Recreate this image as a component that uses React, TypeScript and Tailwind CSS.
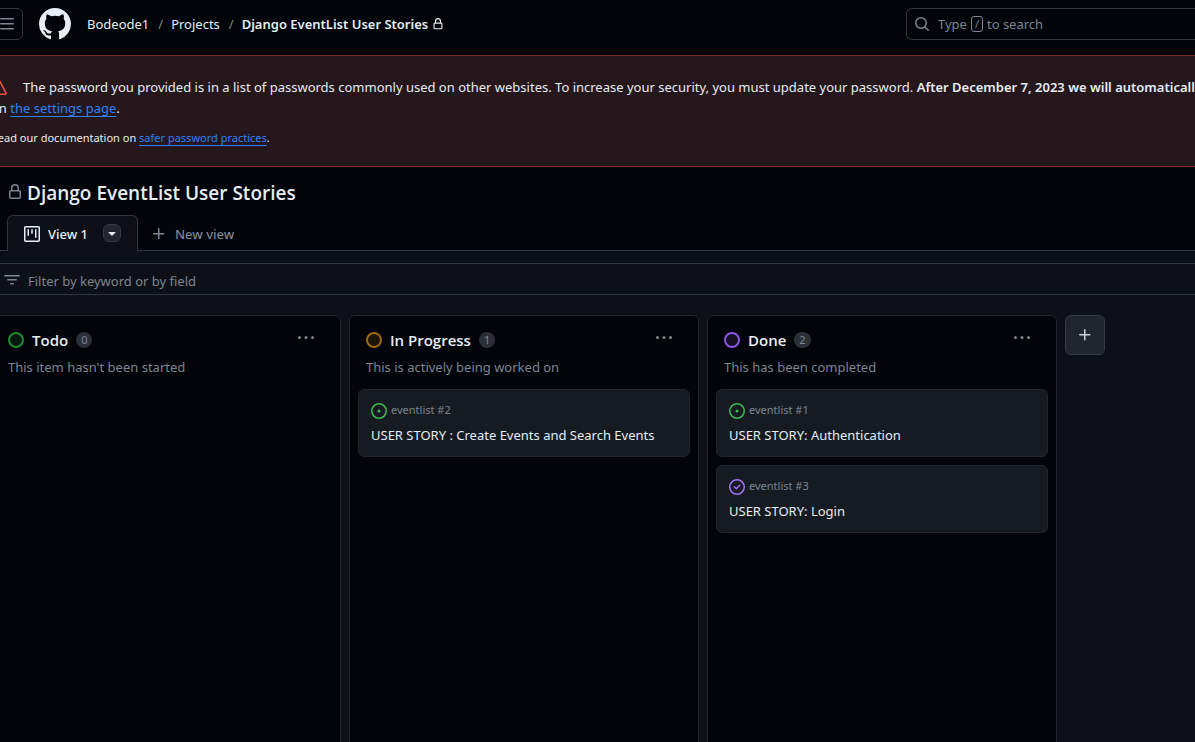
import type { ReactNode } from "react";

type IconProps = { className?: string; size?: number; children?: ReactNode };

function Octicon({ className = "", size = 16, children }: IconProps) {
  return (
    <svg
      aria-hidden="true"
      viewBox="0 0 16 16"
      width={size}
      height={size}
      fill="currentColor"
      className={`shrink-0 ${className}`}
    >
      {children}
    </svg>
  );
}

const paths = {
  bars: "M1 2.75A.75.75 0 0 1 1.75 2h12.5a.75.75 0 0 1 0 1.5H1.75A.75.75 0 0 1 1 2.75Zm0 5A.75.75 0 0 1 1.75 7h12.5a.75.75 0 0 1 0 1.5H1.75A.75.75 0 0 1 1 7.75ZM1.75 12h12.5a.75.75 0 0 1 0 1.5H1.75a.75.75 0 0 1 0-1.5Z",
  github:
    "M8 0c4.42 0 8 3.58 8 8a8.013 8.013 0 0 1-5.45 7.59c-.4.08-.55-.17-.55-.38 0-.27.01-1.13.01-2.2 0-.75-.25-1.23-.54-1.48 1.78-.2 3.65-.88 3.65-3.95 0-.88-.31-1.59-.82-2.15.08-.2.36-1.02-.08-2.12 0 0-.67-.22-2.2.82-.64-.18-1.32-.27-2-.27-.68 0-1.36.09-2 .27-1.53-1.03-2.2-.82-2.2-.82-.44 1.1-.16 1.92-.08 2.12-.51.56-.82 1.28-.82 2.15 0 3.06 1.86 3.75 3.64 3.95-.23.2-.44.55-.51 1.07-.46.21-1.61.55-2.33-.66-.15-.24-.6-.83-1.23-.82-.67.01-.27.38.01.53.34.19.73.9.82 1.13.16.45.68 1.31 2.69.94 0 .67.01 1.3.01 1.49 0 .21-.15.45-.55.38A7.995 7.995 0 0 1 0 8c0-4.42 3.58-8 8-8Z",
  lock: "M4 4a4 4 0 0 1 8 0v2h.25c.966 0 1.75.784 1.75 1.75v5.5A1.75 1.75 0 0 1 12.25 15h-8.5A1.75 1.75 0 0 1 2 13.25v-5.5C2 6.784 2.784 6 3.75 6H4Zm8.25 3.5h-8.5a.25.25 0 0 0-.25.25v5.5c0 .138.112.25.25.25h8.5a.25.25 0 0 0 .25-.25v-5.5a.25.25 0 0 0-.25-.25ZM10.5 6V4a2.5 2.5 0 1 0-5 0v2Z",
  search:
    "M10.68 11.74a6 6 0 0 1-7.922-8.982 6 6 0 0 1 8.982 7.922l3.04 3.04a.749.749 0 0 1-.326 1.275.749.749 0 0 1-.734-.215ZM11.5 7a4.499 4.499 0 1 0-8.997 0A4.499 4.499 0 0 0 11.5 7Z",
  alert:
    "M6.457 1.047c.659-1.234 2.427-1.234 3.086 0l6.082 11.378A1.75 1.75 0 0 1 14.082 15H1.918a1.75 1.75 0 0 1-1.543-2.575Zm1.763.707a.25.25 0 0 0-.44 0L1.698 13.132a.25.25 0 0 0 .22.368h12.164a.25.25 0 0 0 .22-.368Zm.53 3.996v2.5a.75.75 0 0 1-1.5 0v-2.5a.75.75 0 0 1 1.5 0ZM9 11a1 1 0 1 1-2 0 1 1 0 0 1 2 0Z",
  project:
    "M1.75 0h12.5C15.216 0 16 .784 16 1.75v12.5A1.75 1.75 0 0 1 14.25 16H1.75A1.75 1.75 0 0 1 0 14.25V1.75C0 .784.784 0 1.75 0ZM1.5 1.75v12.5c0 .138.112.25.25.25h12.5a.25.25 0 0 0 .25-.25V1.75a.25.25 0 0 0-.25-.25H1.75a.25.25 0 0 0-.25.25ZM11.75 3a.75.75 0 0 1 .75.75v7.5a.75.75 0 0 1-1.5 0v-7.5a.75.75 0 0 1 .75-.75Zm-8.25.75a.75.75 0 0 1 1.5 0v5.5a.75.75 0 0 1-1.5 0ZM8 3a.75.75 0 0 1 .75.75v3.5a.75.75 0 0 1-1.5 0v-3.5A.75.75 0 0 1 8 3Z",
  triangle:
    "m4.427 7.427 3.396 3.396a.25.25 0 0 0 .354 0l3.396-3.396A.25.25 0 0 0 11.396 7H4.604a.25.25 0 0 0-.177.427Z",
  plus: "M7.75 2a.75.75 0 0 1 .75.75V7h4.25a.75.75 0 0 1 0 1.5H8.5v4.25a.75.75 0 0 1-1.5 0V8.5H2.75a.75.75 0 0 1 0-1.5H7V2.75A.75.75 0 0 1 7.75 2Z",
  filter:
    "M.75 3h14.5a.75.75 0 0 1 0 1.5H.75a.75.75 0 0 1 0-1.5ZM3 7.75A.75.75 0 0 1 3.75 7h8.5a.75.75 0 0 1 0 1.5h-8.5A.75.75 0 0 1 3 7.75Zm3 4a.75.75 0 0 1 .75-.75h2.5a.75.75 0 0 1 0 1.5h-2.5a.75.75 0 0 1-.75-.75Z",
  ring: "M8 0a8 8 0 1 1 0 16A8 8 0 0 1 8 0ZM1.5 8a6.5 6.5 0 1 0 13 0 6.5 6.5 0 0 0-13 0Z",
  check:
    "M11.28 6.78a.75.75 0 0 0-1.06-1.06L7.25 8.69 5.78 7.22a.75.75 0 0 0-1.06 1.06l2 2a.75.75 0 0 0 1.06 0l3.5-3.5Z",
};

type Item = { ref: string; title: string; closed?: boolean };
type ColumnData = {
  name: string;
  description: string;
  dot: string;
  items: Item[];
};

const columns: ColumnData[] = [
  {
    name: "Todo",
    description: "This item hasn't been started",
    dot: "border-[#238636] bg-[#051a10]",
    items: [],
  },
  {
    name: "In Progress",
    description: "This is actively being worked on",
    dot: "border-[#9e6a03] bg-[#1b1509]",
    items: [{ ref: "eventlist #2", title: "USER STORY : Create Events and Search Events" }],
  },
  {
    name: "Done",
    description: "This has been completed",
    dot: "border-[#8957e5] bg-[#130f20]",
    items: [
      { ref: "eventlist #1", title: "USER STORY: Authentication" },
      { ref: "eventlist #3", title: "USER STORY: Login", closed: true },
    ],
  },
];

function Card({ item }: { item: Item }) {
  return (
    <li className="flex h-[68px] flex-col rounded-md border border-[#21262d] bg-[#161b22] px-3 pt-3">
      <div className="flex h-4 items-start gap-1 text-[#7d8590]">
        <Octicon className={`mt-px ${item.closed ? "text-[#a371f7]" : "text-[#3fb950]"}`}>
          <path d={paths.ring} />
          {item.closed ? <path d={paths.check} /> : <circle cx="8" cy="8" r="1.5" />}
        </Octicon>
        <span className="text-[11px] leading-4">{item.ref}</span>
      </div>
      <a href="#item" className="mt-[7px] whitespace-nowrap leading-5">
        {item.title}
      </a>
    </li>
  );
}

function Column({ column }: { column: ColumnData }) {
  return (
    <section className="flex w-[350px] shrink-0 flex-col rounded-md border border-[#21262d] bg-[#010409]">
      <header className="px-4 pt-3">
        <div className="flex h-6 items-center">
          <span className={`size-4 rounded-full border-2 ${column.dot}`} />
          <h2 className="ml-2 font-['Open_Sans','Noto_Sans',sans-serif] text-[15px] font-semibold leading-6">
            {column.name}
          </h2>
          <span className="ml-2 flex h-4 items-center rounded-full bg-[#2b3038] px-[5px] text-[11px] leading-4 text-[#7d8590]">
            {column.items.length}
          </span>
          <button
            type="button"
            aria-label={`Actions for column ${column.name}`}
            className="mb-1 ml-auto mr-[10px] flex size-4 items-center text-[#7d8590]"
          >
            <Octicon>
              <circle cx="1.5" cy="7.5" r="1.5" />
              <circle cx="8" cy="7.5" r="1.5" />
              <circle cx="14.5" cy="7.5" r="1.5" />
            </Octicon>
          </button>
        </div>
        <p className="mt-[5px] leading-5 text-[#7d8590]">{column.description}</p>
      </header>
      <ul className="flex flex-col gap-2 px-2 pt-3">
        {column.items.map((item) => (
          <Card key={item.ref} item={item} />
        ))}
      </ul>
    </section>
  );
}

export default function App() {
  return (
    <div className="h-screen overflow-hidden bg-[#0d1117] font-['Noto_Sans','Open_Sans',sans-serif] text-[13px] text-[#e6edf3]">
      <div className="-ml-[25px] flex h-full flex-col">
        <header className="flex h-[55px] shrink-0 items-center bg-[#010409] pb-[7px] pl-4">
          <button
            type="button"
            aria-label="Open global navigation menu"
            className="flex size-8 items-center justify-center rounded-md border border-[#30363d] text-[#7d8590]"
          >
            <Octicon>
              <path d={paths.bars} />
            </Octicon>
          </button>
          <a href="#home" aria-label="Homepage" className="ml-4">
            <Octicon size={32}>
              <path d={paths.github} />
            </Octicon>
          </a>
          <nav aria-label="Breadcrumb" className="ml-4 flex items-center whitespace-nowrap leading-5">
            <a href="#user">Bodeode1</a>
            <span className="ml-[9px] mr-2 text-[#7d8590]">/</span>
            <a href="#projects">Projects</a>
            <span className="ml-[9px] mr-2 text-[#7d8590]">/</span>
            <a href="#project" className="font-semibold">
              Django EventList User Stories
            </a>
            <Octicon size={12} className="ml-1">
              <path d={paths.lock} />
            </Octicon>
          </nav>
          <button
            type="button"
            className="ml-auto flex h-8 w-[289px] shrink-0 items-center rounded-l-md border border-r-0 border-[#30363d] pl-[7px] leading-5 text-[#7d8590]"
          >
            <Octicon>
              <path d={paths.search} />
            </Octicon>
            <span className="ml-2">Type</span>
            <kbd className="mx-1 flex h-4 w-3 items-center justify-center rounded-[3px] border border-[#7d8590] font-[inherit] text-[11px]">
              /
            </kbd>
            <span>to search</span>
          </button>
        </header>

        <div
          role="alert"
          className="h-28 shrink-0 whitespace-nowrap border-y border-[#792e2e] bg-[#25171c] pl-4 pt-[21px]"
        >
          <p className="flex items-center leading-[21px]">
            <Octicon className="mr-4 text-[#f85149]">
              <path d={paths.alert} />
            </Octicon>
            <span>
              The password you provided is in a list of passwords commonly used on other websites. To increase your
              security, you must update your password.{" "}
              <b className="font-semibold">After December 7, 2023 we will automatically</b>
            </span>
          </p>
          <p className="leading-[21px]">
            on{" "}
            <a href="#settings" className="text-[#2f81f7] underline underline-offset-3">
              the settings page
            </a>
            .
          </p>
          <p className="mt-[10px] text-[11px] leading-[18px]">
            Read our documentation on{" "}
            <a href="#practices" className="text-[#2f81f7] underline underline-offset-3">
              safer password practices
            </a>
            .
          </p>
        </div>

        <div className="flex h-12 shrink-0 items-center bg-[#010409] pl-8 pt-1">
          <Octicon className="mb-[2px] text-[#7d8590]">
            <path d={paths.lock} />
          </Octicon>
          <h1 className="ml-1 font-['Open_Sans','Noto_Sans',sans-serif] text-[19px] font-semibold">
            Django EventList User Stories
          </h1>
        </div>

        <div className="flex h-9 shrink-0 border-b border-[#30363d] bg-[#010409] pl-8">
          <div className="-mb-px flex w-[131px] items-center rounded-t-md border border-b-0 border-[#30363d] bg-[#0d1117] px-4">
            <a href="#view-1" className="flex items-center gap-2 whitespace-nowrap pt-px font-medium leading-5">
              <Octicon>
                <path d={paths.project} />
              </Octicon>
              View 1
            </a>
            <button
              type="button"
              aria-label="View options"
              className="mb-[2px] ml-auto flex size-[18px] items-center justify-center rounded-md border border-[#363b42] bg-[#21262d]"
            >
              <Octicon>
                <path d={paths.triangle} />
              </Octicon>
            </button>
          </div>
          <button
            type="button"
            className="ml-[13px] flex items-center gap-2 pt-[2px] font-medium leading-5 text-[#7d8590]"
          >
            <Octicon>
              <path d={paths.plus} />
            </Octicon>
            New view
          </button>
        </div>

        <label className="ml-4 mt-3 flex h-8 shrink-0 items-center border-y border-l border-[#30363d] pl-3 pt-[2px] text-[#7d8590]">
          <Octicon>
            <path d={paths.filter} />
          </Octicon>
          <input
            type="text"
            aria-label="Filter by keyword or by field"
            placeholder="Filter by keyword or by field"
            className="ml-2 h-full min-w-0 flex-1 bg-transparent pt-px outline-none placeholder:text-[#7d8590]"
          />
        </label>

        <main className="-mb-2 flex min-h-0 flex-1 gap-2 pl-4 pt-5">
          {columns.map((column) => (
            <Column key={column.name} column={column} />
          ))}
          <button
            type="button"
            aria-label="Add a new column"
            className="flex size-10 shrink-0 items-center justify-center rounded-md border border-[#363b42] bg-[#21262d] text-[#c9d1d9]"
          >
            <Octicon>
              <path d={paths.plus} />
            </Octicon>
          </button>
        </main>
      </div>
    </div>
  );
}
